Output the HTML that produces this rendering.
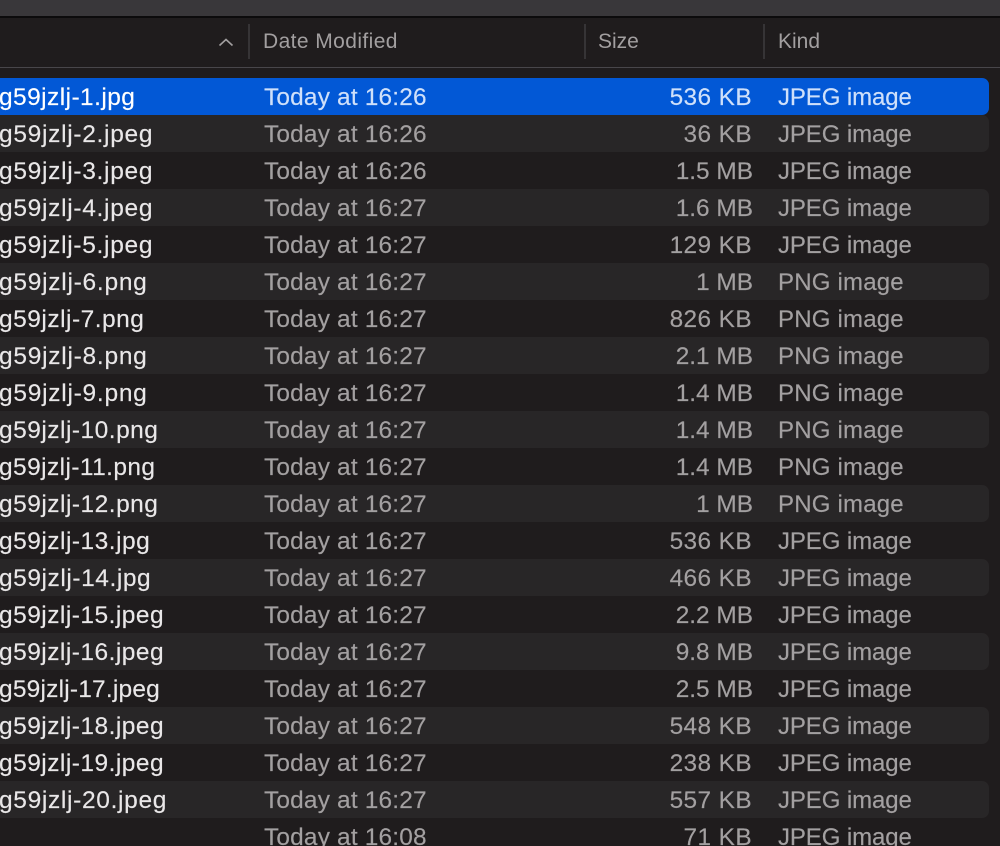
<!DOCTYPE html>
<html><head><meta charset="utf-8">
<style>
html,body{margin:0;padding:0;background:#1f1c1d}
#w{position:relative;width:1000px;height:846px;overflow:hidden;background:#1f1c1d;font-family:"Liberation Sans",sans-serif}
#w div{position:absolute;white-space:nowrap}
.top{left:0;top:0;width:1000px;height:16px;background:#39373a}
.bl{left:0;top:16px;width:1000px;height:2px;background:#0c0b0c}
.hl{left:0;top:67px;width:1000px;height:1px;background:#48464a}
.sep{top:24px;width:2px;height:35px;background:#363436}
.h{top:28px;font-size:21px;line-height:28px;color:#a29fa0}
.r{left:-10px;width:999px;height:37px;border-radius:7px}
.o{background:#282627}
.s{background:#0258d6}
.n,.d,.z,.k,.p{height:37px;line-height:39px;font-size:24px;color:#a3a0a1;-webkit-text-stroke:.15px currentColor}
.n{left:-1px;font-size:24.5px;color:#e9e7e8}
.d{left:264px;font-size:24.4px;letter-spacing:.2px}
.z{right:247px;text-align:right;font-size:24.4px}
.zk{right:248px;letter-spacing:.4px}
.k{left:778px;letter-spacing:-.1px}
.p{left:778px;letter-spacing:.2px}
.sel{color:#fff}
.sel2{color:#cfe0fa}
</style></head><body><div id="w">
<div class="top"></div><div class="bl"></div><div class="hl"></div>
<div class="sep" style="left:248px"></div><div class="sep" style="left:584px"></div><div class="sep" style="left:763px"></div>
<svg style="position:absolute;left:218px;top:37px" width="16" height="10" viewBox="0 0 16 10"><path d="M1.5 8.5 L8 2.5 L14.5 8.5" fill="none" stroke="#a29fa0" stroke-width="1.6"/></svg>
<div class="h" style="left:263px;letter-spacing:.41px">Date Modified</div>
<div class="h" style="left:598px">Size</div>
<div class="h" style="left:778px">Kind</div>

<div class="r s" style="top:78px"></div>
<div class="n sel" style="top:78px;letter-spacing:.43px">g59jzlj-1.jpg</div><div class="d sel2" style="top:78px">Today at 16:26</div><div class="z zk sel2" style="top:78px">536 KB</div><div class="k sel2" style="top:78px">JPEG image</div>

<div class="r o" style="top:115px"></div>
<div class="n" style="top:115px;letter-spacing:.7px">g59jzlj-2.jpeg</div><div class="d" style="top:115px">Today at 16:26</div><div class="z zk" style="top:115px">36 KB</div><div class="k" style="top:115px">JPEG image</div>

<div class="n" style="top:152px;letter-spacing:.7px">g59jzlj-3.jpeg</div><div class="d" style="top:152px">Today at 16:26</div><div class="z" style="top:152px">1.5 MB</div><div class="k" style="top:152px">JPEG image</div>

<div class="r o" style="top:189px"></div>
<div class="n" style="top:189px;letter-spacing:.7px">g59jzlj-4.jpeg</div><div class="d" style="top:189px">Today at 16:27</div><div class="z" style="top:189px">1.6 MB</div><div class="k" style="top:189px">JPEG image</div>

<div class="n" style="top:226px;letter-spacing:.7px">g59jzlj-5.jpeg</div><div class="d" style="top:226px">Today at 16:27</div><div class="z zk" style="top:226px">129 KB</div><div class="k" style="top:226px">JPEG image</div>

<div class="r o" style="top:263px"></div>
<div class="n" style="top:263px;letter-spacing:.74px">g59jzlj-6.png</div><div class="d" style="top:263px">Today at 16:27</div><div class="z" style="top:263px">1 MB</div><div class="p" style="top:263px">PNG image</div>

<div class="n" style="top:300px;letter-spacing:.5px">g59jzlj-7.png</div><div class="d" style="top:300px">Today at 16:27</div><div class="z zk" style="top:300px">826 KB</div><div class="p" style="top:300px">PNG image</div>

<div class="r o" style="top:337px"></div>
<div class="n" style="top:337px;letter-spacing:.74px">g59jzlj-8.png</div><div class="d" style="top:337px">Today at 16:27</div><div class="z" style="top:337px">2.1 MB</div><div class="p" style="top:337px">PNG image</div>

<div class="n" style="top:374px;letter-spacing:.74px">g59jzlj-9.png</div><div class="d" style="top:374px">Today at 16:27</div><div class="z" style="top:374px">1.4 MB</div><div class="p" style="top:374px">PNG image</div>

<div class="r o" style="top:411px"></div>
<div class="n" style="top:411px;letter-spacing:.49px">g59jzlj-10.png</div><div class="d" style="top:411px">Today at 16:27</div><div class="z" style="top:411px">1.4 MB</div><div class="p" style="top:411px">PNG image</div>

<div class="n" style="top:448px;letter-spacing:.41px">g59jzlj-11.png</div><div class="d" style="top:448px">Today at 16:27</div><div class="z" style="top:448px">1.4 MB</div><div class="p" style="top:448px">PNG image</div>

<div class="r o" style="top:485px"></div>
<div class="n" style="top:485px;letter-spacing:.49px">g59jzlj-12.png</div><div class="d" style="top:485px">Today at 16:27</div><div class="z" style="top:485px">1 MB</div><div class="p" style="top:485px">PNG image</div>

<div class="n" style="top:522px;letter-spacing:.49px">g59jzlj-13.jpg</div><div class="d" style="top:522px">Today at 16:27</div><div class="z zk" style="top:522px">536 KB</div><div class="k" style="top:522px">JPEG image</div>

<div class="r o" style="top:559px"></div>
<div class="n" style="top:559px;letter-spacing:.56px">g59jzlj-14.jpg</div><div class="d" style="top:559px">Today at 16:27</div><div class="z zk" style="top:559px">466 KB</div><div class="k" style="top:559px">JPEG image</div>

<div class="n" style="top:596px;letter-spacing:.47px">g59jzlj-15.jpeg</div><div class="d" style="top:596px">Today at 16:27</div><div class="z" style="top:596px">2.2 MB</div><div class="k" style="top:596px">JPEG image</div>

<div class="r o" style="top:633px"></div>
<div class="n" style="top:633px;letter-spacing:.47px">g59jzlj-16.jpeg</div><div class="d" style="top:633px">Today at 16:27</div><div class="z" style="top:633px">9.8 MB</div><div class="k" style="top:633px">JPEG image</div>

<div class="n" style="top:670px;letter-spacing:.2px">g59jzlj-17.jpeg</div><div class="d" style="top:670px">Today at 16:27</div><div class="z" style="top:670px">2.5 MB</div><div class="k" style="top:670px">JPEG image</div>

<div class="r o" style="top:707px"></div>
<div class="n" style="top:707px;letter-spacing:.47px">g59jzlj-18.jpeg</div><div class="d" style="top:707px">Today at 16:27</div><div class="z zk" style="top:707px">548 KB</div><div class="k" style="top:707px">JPEG image</div>

<div class="n" style="top:744px;letter-spacing:.47px">g59jzlj-19.jpeg</div><div class="d" style="top:744px">Today at 16:27</div><div class="z zk" style="top:744px">238 KB</div><div class="k" style="top:744px">JPEG image</div>

<div class="r o" style="top:781px"></div>
<div class="n" style="top:781px;letter-spacing:.67px">g59jzlj-20.jpeg</div><div class="d" style="top:781px">Today at 16:27</div><div class="z zk" style="top:781px">557 KB</div><div class="k" style="top:781px">JPEG image</div>

<div class="d" style="top:818px">Today at 16:08</div><div class="z zk" style="top:818px">71 KB</div><div class="k" style="top:818px">JPEG image</div>
</div></body></html>
